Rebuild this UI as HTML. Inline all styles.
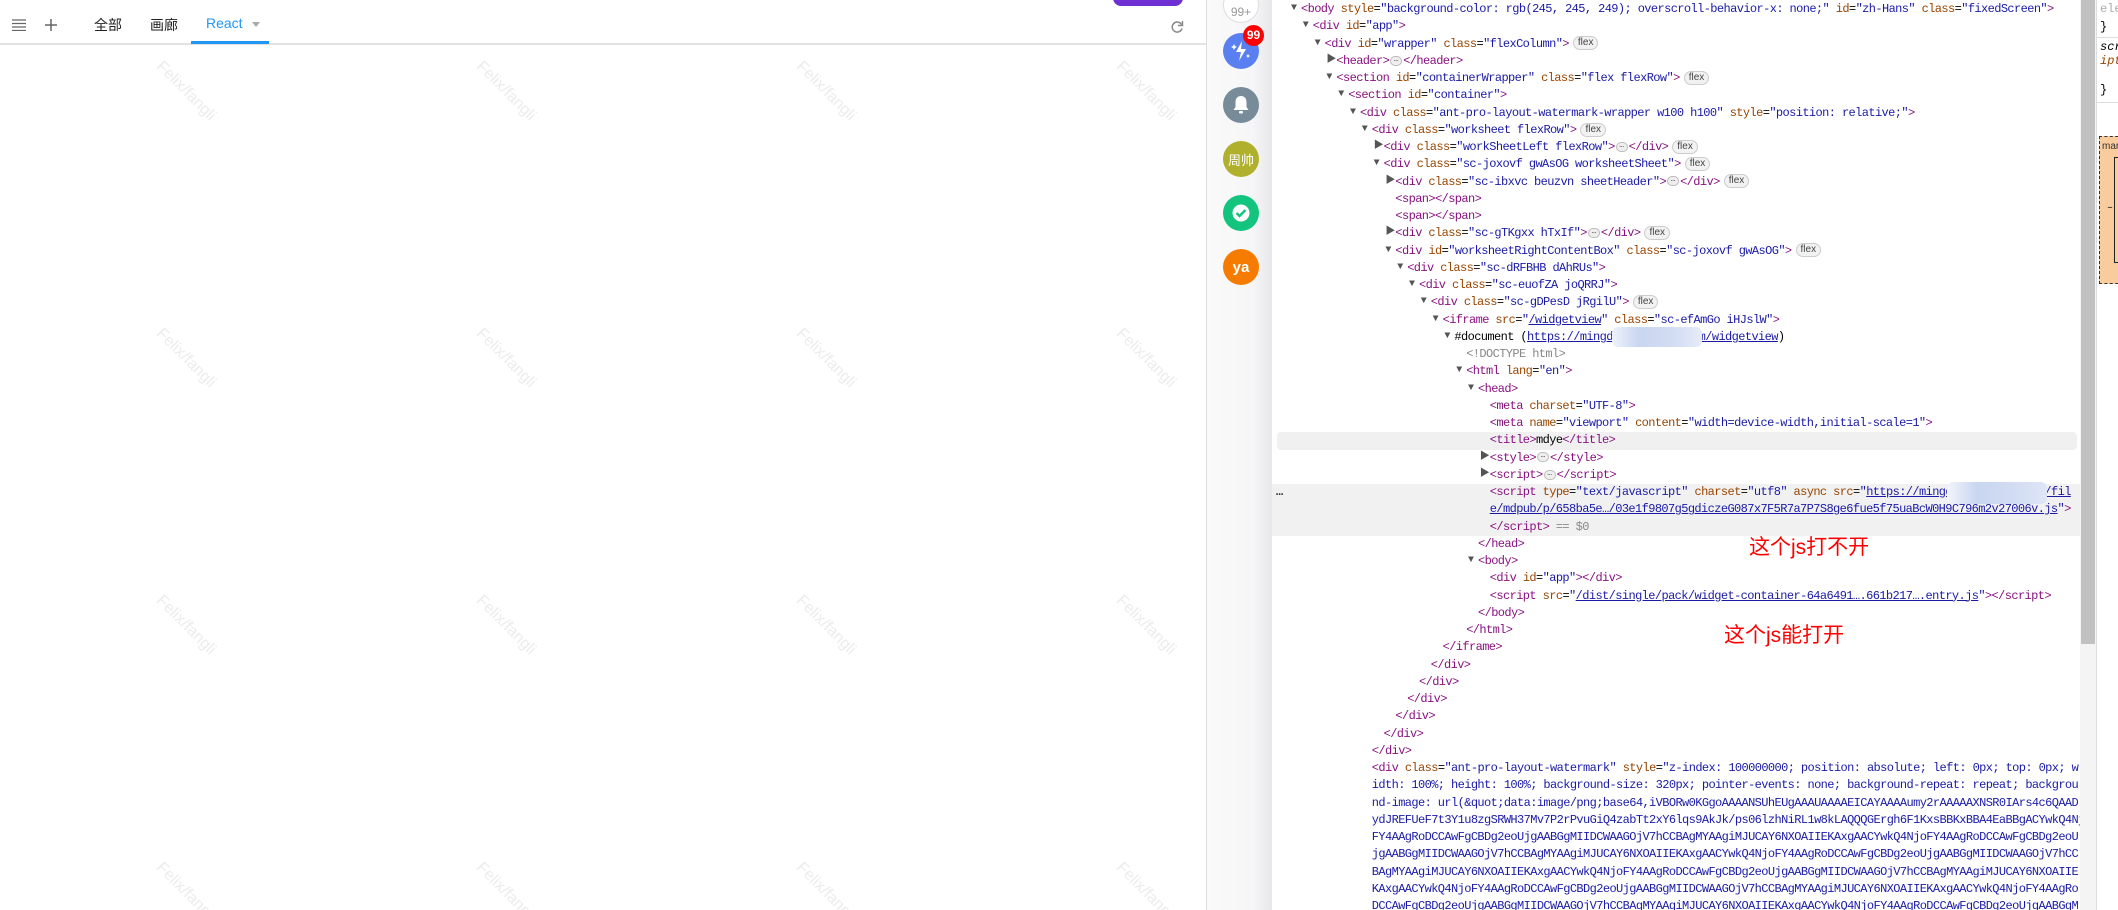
<!DOCTYPE html>
<html><head><meta charset="utf-8">
<style>
*{margin:0;padding:0;box-sizing:border-box}
body{width:2118px;height:910px;overflow:hidden;background:#fff;position:relative;font-family:"Liberation Sans","Noto Sans CJK SC",sans-serif}
.app{position:absolute;left:0;top:0;width:1206px;height:910px;background:#fff;overflow:hidden}
.wm{position:absolute;color:#ececec;font-size:16px;transform:rotate(45deg);transform-origin:0 0;white-space:nowrap}
.tabs{position:absolute;left:0;top:0;width:1206px;height:45px;border-bottom:2px solid #e2e2e2}
.tab{position:absolute;top:15px;font-size:14px;color:#222}
.side{position:absolute;left:1206px;top:0;width:66px;height:910px;border-left:1px solid #ddd;background:linear-gradient(90deg,#fafafa,#f6f6f8 70%,#e8e8ec)}
.av{position:absolute;left:16px;width:36px;height:36px;border-radius:50%;color:#fff;font-size:14px;font-weight:bold;display:flex;align-items:center;justify-content:center}
.dt{position:absolute;left:1272px;top:0;width:808px;height:910px;background:#fff;overflow:hidden;font-family:"Liberation Mono","Noto Sans CJK SC",monospace;font-size:12px;letter-spacing:-0.6px}
.r{position:absolute;height:17.25px;line-height:17.25px;white-space:nowrap}
.t{color:#881280}.a{color:#994500}.v{color:#1a1aa6}.g{color:#888}
.u{color:#1a1aa6;text-decoration:underline}
.ar{position:absolute;font-size:10px;color:#555;letter-spacing:0;line-height:12px}
.fx{display:inline-block;font-family:"Liberation Sans",sans-serif;letter-spacing:0;font-size:10px;color:#444;border:1px solid #ccc;background:#f2f2f2;border-radius:8px;height:14px;line-height:12px;padding:0 4px;margin-left:4px;vertical-align:middle}
.el{display:inline-block;letter-spacing:0;font-size:8px;color:#333;border:1px solid #bbb;background:#eee;border-radius:6px;width:12px;height:10px;line-height:6px;text-align:center;vertical-align:middle;margin:0 1px}
.rp{position:absolute;left:2096px;top:0;width:22px;height:910px;border-left:1px solid #ddd;background:#fff;overflow:hidden;font-family:"Liberation Mono",monospace;font-size:12px}
</style></head><body>
<div class="app">
  <div class="wm" style="left:165px;top:58px">Felix/fangli</div>
  <div class="wm" style="left:485px;top:58px">Felix/fangli</div>
  <div class="wm" style="left:805px;top:58px">Felix/fangli</div>
  <div class="wm" style="left:1125px;top:58px">Felix/fangli</div>
  <div class="wm" style="left:165px;top:325px">Felix/fangli</div>
  <div class="wm" style="left:485px;top:325px">Felix/fangli</div>
  <div class="wm" style="left:805px;top:325px">Felix/fangli</div>
  <div class="wm" style="left:1125px;top:325px">Felix/fangli</div>
  <div class="wm" style="left:165px;top:592px">Felix/fangli</div>
  <div class="wm" style="left:485px;top:592px">Felix/fangli</div>
  <div class="wm" style="left:805px;top:592px">Felix/fangli</div>
  <div class="wm" style="left:1125px;top:592px">Felix/fangli</div>
  <div class="wm" style="left:165px;top:859px">Felix/fangli</div>
  <div class="wm" style="left:485px;top:859px">Felix/fangli</div>
  <div class="wm" style="left:805px;top:859px">Felix/fangli</div>
  <div class="wm" style="left:1125px;top:859px">Felix/fangli</div>
  <div class="tabs">
    <svg style="position:absolute;left:12px;top:19px" width="14" height="12"><path d="M0 1h14M0 4.5h14M0 8h14M0 11.5h14" stroke="#666" stroke-width="1.3"/></svg>
    <svg style="position:absolute;left:45px;top:19px" width="12" height="12"><path d="M6 0v12M0 6h12" stroke="#666" stroke-width="1.5"/></svg>
    <div class="tab" style="left:94px">全部</div>
    <div class="tab" style="left:150px">画廊</div>
    <div class="tab" style="left:206px;color:#2196f3">React</div>
    <div style="position:absolute;left:252px;top:22px;width:0;height:0;border-left:4px solid transparent;border-right:4px solid transparent;border-top:5px solid #aaa"></div>
    <div style="position:absolute;left:191px;top:41px;width:78px;height:3px;background:#2196f3"></div>
    <div style="position:absolute;left:1113px;top:-10px;width:70px;height:16px;border-radius:8px;background:#6e2fd3"></div>
    <svg style="position:absolute;left:1170px;top:20px" width="14" height="14" viewBox="0 0 14 14"><path d="M11.5 4.5A5 5 0 1 0 12 8.5" fill="none" stroke="#888" stroke-width="1.5"/><path d="M12.5 1v4.5H8" fill="none" stroke="#888" stroke-width="1.5"/></svg>
  </div>
</div>
<div class="side">
  <div class="av" style="top:-13px;background:#fff;border:1px solid #ddd;color:#999;font-weight:normal;font-size:12px;padding-top:14px">99+</div>
  <div class="av" style="top:33px;background:#5a7ff0"><svg width="20" height="22" viewBox="0 0 20 22"><path d="M11 1L5 12h5l-2 9 7-12h-5z" fill="#fff"/><path d="M3 4l1 2 2 1-2 1-1 2-1-2-2-1 2-1z" fill="#fff"/><path d="M17 14l.7 1.3 1.3.7-1.3.7-.7 1.3-.7-1.3-1.3-.7 1.3-.7z" fill="#fff"/></svg></div>
  <div style="position:absolute;left:36px;top:25px;width:21px;height:21px;border-radius:50%;background:#f00;color:#fff;font-size:12px;font-weight:bold;text-align:center;line-height:21px">99</div>
  <div class="av" style="top:87px;background:#788b99"><svg width="18" height="20" viewBox="0 0 18 20"><path d="M9 1c-3.5 0-5.5 2.5-5.5 6v5L1.5 15h15l-2-3V7C14.5 3.5 12.5 1 9 1z" fill="#fff"/><rect x="7" y="16" width="4" height="2.5" rx="1" fill="#fff"/></svg></div>
  <div class="av" style="top:141px;background:#b0b02c;font-weight:normal;font-size:13px">周帅</div>
  <div class="av" style="top:195px;background:#12c47e"><svg width="22" height="22" viewBox="0 0 22 22"><circle cx="11" cy="11" r="8.5" fill="#fff"/><path d="M6.5 11l3 3 6-6" fill="none" stroke="#12c47e" stroke-width="2.4"/></svg></div>
  <div class="av" style="top:249px;background:#f57c00;font-size:15px">ya</div>
</div>
<div class="dt" id="dt"></div>
<div style="position:absolute;left:2080px;top:0;width:16px;height:910px;background:#f4f4f4"></div>
<div style="position:absolute;left:2081px;top:0;width:14px;height:644px;background:#c1c1c1"></div>
<div class="rp">
  <div style="position:absolute;left:3px;top:2px;color:#aaa">ele</div>
  <div style="position:absolute;left:3px;top:20px">}</div>
  <div style="position:absolute;left:0;top:37px;width:22px;border-top:1px solid #ddd"></div>
  <div style="position:absolute;left:3px;top:40px;font-style:italic">scr</div>
  <div style="position:absolute;left:3px;top:54px;font-style:italic;color:#994500">ipt</div>
  <div style="position:absolute;left:3px;top:83px">}</div>
  <div style="position:absolute;left:0;top:102px;width:22px;border-top:1px solid #ddd"></div>
  <div style="position:absolute;left:2px;top:136px;width:30px;height:148px;background:#f9cc9d;border:1px dashed #333"></div>
  <div style="position:absolute;left:5px;top:141px;font-family:'Liberation Sans',sans-serif;font-size:10px;color:#333">mar</div>
  <div style="position:absolute;left:17px;top:157px;width:20px;height:106px;border:1px solid #222"></div>
  <div style="position:absolute;left:10px;top:203px;font-size:10px">–</div>
</div>
<div style="position:absolute;left:1749px;top:531px;font-size:21px;color:#f00;font-family:'Liberation Sans','Noto Sans CJK SC',sans-serif">这个js打不开</div>
<div style="position:absolute;left:1724px;top:619px;font-size:21px;color:#f00;font-family:'Liberation Sans','Noto Sans CJK SC',sans-serif">这个js能打开</div>
<script>
var rows=[
[0,'v','<span class=t>&lt;body</span> <span class=a>style</span>=<span class=v>"background-color: rgb(245, 245, 249); overscroll-behavior-x: none;"</span> <span class=a>id</span>=<span class=v>"zh-Hans"</span> <span class=a>class</span>=<span class=v>"fixedScreen"</span><span class=t>&gt;</span>'],
[1,'v','<span class=t>&lt;div</span> <span class=a>id</span>=<span class=v>"app"</span><span class=t>&gt;</span>'],
[2,'v','<span class=t>&lt;div</span> <span class=a>id</span>=<span class=v>"wrapper"</span> <span class=a>class</span>=<span class=v>"flexColumn"</span><span class=t>&gt;</span><span class=fx>flex</span>'],
[3,'r','<span class=t>&lt;header&gt;</span><span class=el>…</span><span class=t>&lt;/header&gt;</span>'],
[3,'v','<span class=t>&lt;section</span> <span class=a>id</span>=<span class=v>"containerWrapper"</span> <span class=a>class</span>=<span class=v>"flex flexRow"</span><span class=t>&gt;</span><span class=fx>flex</span>'],
[4,'v','<span class=t>&lt;section</span> <span class=a>id</span>=<span class=v>"container"</span><span class=t>&gt;</span>'],
[5,'v','<span class=t>&lt;div</span> <span class=a>class</span>=<span class=v>"ant-pro-layout-watermark-wrapper w100 h100"</span> <span class=a>style</span>=<span class=v>"position: relative;"</span><span class=t>&gt;</span>'],
[6,'v','<span class=t>&lt;div</span> <span class=a>class</span>=<span class=v>"worksheet flexRow"</span><span class=t>&gt;</span><span class=fx>flex</span>'],
[7,'r','<span class=t>&lt;div</span> <span class=a>class</span>=<span class=v>"workSheetLeft flexRow"</span><span class=t>&gt;</span><span class=el>…</span><span class=t>&lt;/div&gt;</span><span class=fx>flex</span>'],
[7,'v','<span class=t>&lt;div</span> <span class=a>class</span>=<span class=v>"sc-joxovf gwAsOG worksheetSheet"</span><span class=t>&gt;</span><span class=fx>flex</span>'],
[8,'r','<span class=t>&lt;div</span> <span class=a>class</span>=<span class=v>"sc-ibxvc beuzvn sheetHeader"</span><span class=t>&gt;</span><span class=el>…</span><span class=t>&lt;/div&gt;</span><span class=fx>flex</span>'],
[8,'','<span class=t>&lt;span&gt;&lt;/span&gt;</span>'],
[8,'','<span class=t>&lt;span&gt;&lt;/span&gt;</span>'],
[8,'r','<span class=t>&lt;div</span> <span class=a>class</span>=<span class=v>"sc-gTKgxx hTxIf"</span><span class=t>&gt;</span><span class=el>…</span><span class=t>&lt;/div&gt;</span><span class=fx>flex</span>'],
[8,'v','<span class=t>&lt;div</span> <span class=a>id</span>=<span class=v>"worksheetRightContentBox"</span> <span class=a>class</span>=<span class=v>"sc-joxovf gwAsOG"</span><span class=t>&gt;</span><span class=fx>flex</span>'],
[9,'v','<span class=t>&lt;div</span> <span class=a>class</span>=<span class=v>"sc-dRFBHB dAhRUs"</span><span class=t>&gt;</span>'],
[10,'v','<span class=t>&lt;div</span> <span class=a>class</span>=<span class=v>"sc-euofZA joQRRJ"</span><span class=t>&gt;</span>'],
[11,'v','<span class=t>&lt;div</span> <span class=a>class</span>=<span class=v>"sc-gDPesD jRgilU"</span><span class=t>&gt;</span><span class=fx>flex</span>'],
[12,'v','<span class=t>&lt;iframe</span> <span class=a>src</span>=<span class=v>"<span class=u>/widgetview</span>"</span> <span class=a>class</span>=<span class=v>"sc-efAmGo iHJslW"</span><span class=t>&gt;</span>'],
[13,'v','#document (<span class=u>https://mingdao.example.com/widgetview</span>)'],
[14,'','<span class=g>&lt;!DOCTYPE html&gt;</span>'],
[14,'v','<span class=t>&lt;html</span> <span class=a>lang</span>=<span class=v>"en"</span><span class=t>&gt;</span>'],
[15,'v','<span class=t>&lt;head&gt;</span>'],
[16,'','<span class=t>&lt;meta</span> <span class=a>charset</span>=<span class=v>"UTF-8"</span><span class=t>&gt;</span>'],
[16,'','<span class=t>&lt;meta</span> <span class=a>name</span>=<span class=v>"viewport"</span> <span class=a>content</span>=<span class=v>"width=device-width,initial-scale=1"</span><span class=t>&gt;</span>'],
[16,'','<span class=t>&lt;title&gt;</span>mdye<span class=t>&lt;/title&gt;</span>'],
[16,'r','<span class=t>&lt;style&gt;</span><span class=el>…</span><span class=t>&lt;/style&gt;</span>'],
[16,'r','<span class=t>&lt;script&gt;</span><span class=el>…</span><span class=t>&lt;/script&gt;</span>'],
[16,'','<span class=t>&lt;script</span> <span class=a>type</span>=<span class=v>"text/javascript"</span> <span class=a>charset</span>=<span class=v>"utf8"</span> <span class=a>async</span> <span class=a>src</span>=<span class=v>"<span class=u>https://mingdao.example.com/fil</span></span>'],
[16,'','<span class=v><span class=u>e/mdpub/p/658ba5e…/03e1f9807g5gdiczeG087x7F5R7a7P7S8ge6fue5f75uaBcW0H9C796m2v27006v.js</span>"</span><span class=t>&gt;</span>'],
[16,'','<span class=t>&lt;/script&gt;</span> <span class=g>== $0</span>'],
[15,'','<span class=t>&lt;/head&gt;</span>'],
[15,'v','<span class=t>&lt;body&gt;</span>'],
[16,'','<span class=t>&lt;div</span> <span class=a>id</span>=<span class=v>"app"</span><span class=t>&gt;&lt;/div&gt;</span>'],
[16,'','<span class=t>&lt;script</span> <span class=a>src</span>=<span class=v>"<span class=u>/dist/single/pack/widget-container-64a6491….661b217….entry.js</span>"</span><span class=t>&gt;&lt;/script&gt;</span>'],
[15,'','<span class=t>&lt;/body&gt;</span>'],
[14,'','<span class=t>&lt;/html&gt;</span>'],
[12,'','<span class=t>&lt;/iframe&gt;</span>'],
[11,'','<span class=t>&lt;/div&gt;</span>'],
[10,'','<span class=t>&lt;/div&gt;</span>'],
[9,'','<span class=t>&lt;/div&gt;</span>'],
[8,'','<span class=t>&lt;/div&gt;</span>'],
[7,'','<span class=t>&lt;/div&gt;</span>'],
[6,'','<span class=t>&lt;/div&gt;</span>'],
[6,'','<span class=t>&lt;div</span> <span class=a>class</span>=<span class=v>"ant-pro-layout-watermark"</span> <span class=a>style</span>=<span class=v>"z-index: 100000000; position: absolute; left: 0px; top: 0px; w</span>'],
[6,'','<span class=v>idth: 100%; height: 100%; background-size: 320px; pointer-events: none; background-repeat: repeat; backgrou</span>'],
[6,'','<span class=v>nd-image: url(&amp;quot;data:image/png;base64,iVBORw0KGgoAAAANSUhEUgAAAUAAAAEICAYAAAAumy2rAAAAAXNSR0IArs4c6QAAD</span>'],
[6,'','<span class=v>ydJREFUeF7t3Y1u8zgSRWH37Mv7P2rPvuGiQ4zabTt2xY6lqs9AkJk/ps06lzhNiRL1w8kLAQQQGErgh6F1KxsBBKxBBA4EaBBgACYwkQ4NjoFY4AAgRoDCAwFgCBDg2eoUjgAABGgMIIDCWAAGOjV7hCCBAgMYAAgiMJUCAY6NXOAIIEKAxgAACYwkQ4NjoFY4</span>'],
[6,'','<span class=v>FY4AAgRoDCCAwFgCBDg2eoUjgAABGgMIIDCWAAGOjV7hCCBAgMYAAgiMJUCAY6NXOAIIEKAxgAACYwkQ4NjoFY4AAgRoDCCAwFgCBDg2eoU</span>'],
[6,'','<span class=v>jgAABGgMIIDCWAAGOjV7hCCBAgMYAAgiMJUCAY6NXOAIIEKAxgAACYwkQ4NjoFY4AAgRoDCCAwFgCBDg2eoUjgAABGgMIIDCWAAGOjV7hCC</span>'],
[6,'','<span class=v>BAgMYAAgiMJUCAY6NXOAIIEKAxgAACYwkQ4NjoFY4AAgRoDCCAwFgCBDg2eoUjgAABGgMIIDCWAAGOjV7hCCBAgMYAAgiMJUCAY6NXOAIIE</span>'],
[6,'','<span class=v>KAxgAACYwkQ4NjoFY4AAgRoDCCAwFgCBDg2eoUjgAABGgMIIDCWAAGOjV7hCCBAgMYAAgiMJUCAY6NXOAIIEKAxgAACYwkQ4NjoFY4AAgRo</span>'],
[6,'','<span class=v>DCCAwFgCBDg2eoUjgAABGgMIIDCWAAGOjV7hCCBAgMYAAgiMJUCAY6NXOAIIEKAxgAACYwkQ4NjoFY4AAgRoDCCAwFgCBDg2eoUjgAABGgM</span>']
];
var dt=document.getElementById('dt'),h='';
h+='<div style="position:absolute;left:5px;top:'+(1+25*17.25)+'px;width:800px;height:17.25px;background:#f0f0f0;border-radius:4px"></div>';
h+='<div style="position:absolute;left:0;top:'+(1+28*17.25)+'px;width:808px;height:'+(3*17.25)+'px;background:#f1f1f1"></div>';
h+='<div class=r style="left:4px;top:'+(1+28*17.25)+'px;color:#333;font-weight:bold">…</div>';
rows.forEach(function(r,i){
  var x=1301+r[0]*11.8-1272, y=1+i*17.25;
  if(r[1]) h+='<div class="ar" style="left:'+(x-10)+'px;top:'+(y+2)+'px">'+(r[1]=='v'?'▼':'▶')+'</div>';
  h+='<div class=r style="left:'+x+'px;top:'+y+'px">'+r[2]+'</div>';
});
h+='<div style="position:absolute;left:340px;top:'+(1+19*17.25-2)+'px;width:90px;height:20px;background:linear-gradient(90deg,#eef2fb,#c9d6f0 30%,#d3ddf3 70%,#e6ecf9);border-radius:6px"></div>';
h+='<div style="position:absolute;left:675px;top:'+(1+28*17.25-2)+'px;width:100px;height:22px;background:linear-gradient(90deg,#f3f5fb,#c9d6f0 30%,#d3ddf3 70%,#dfe6f6);border-radius:6px"></div>';
dt.innerHTML=h;
</script>
</body></html>
